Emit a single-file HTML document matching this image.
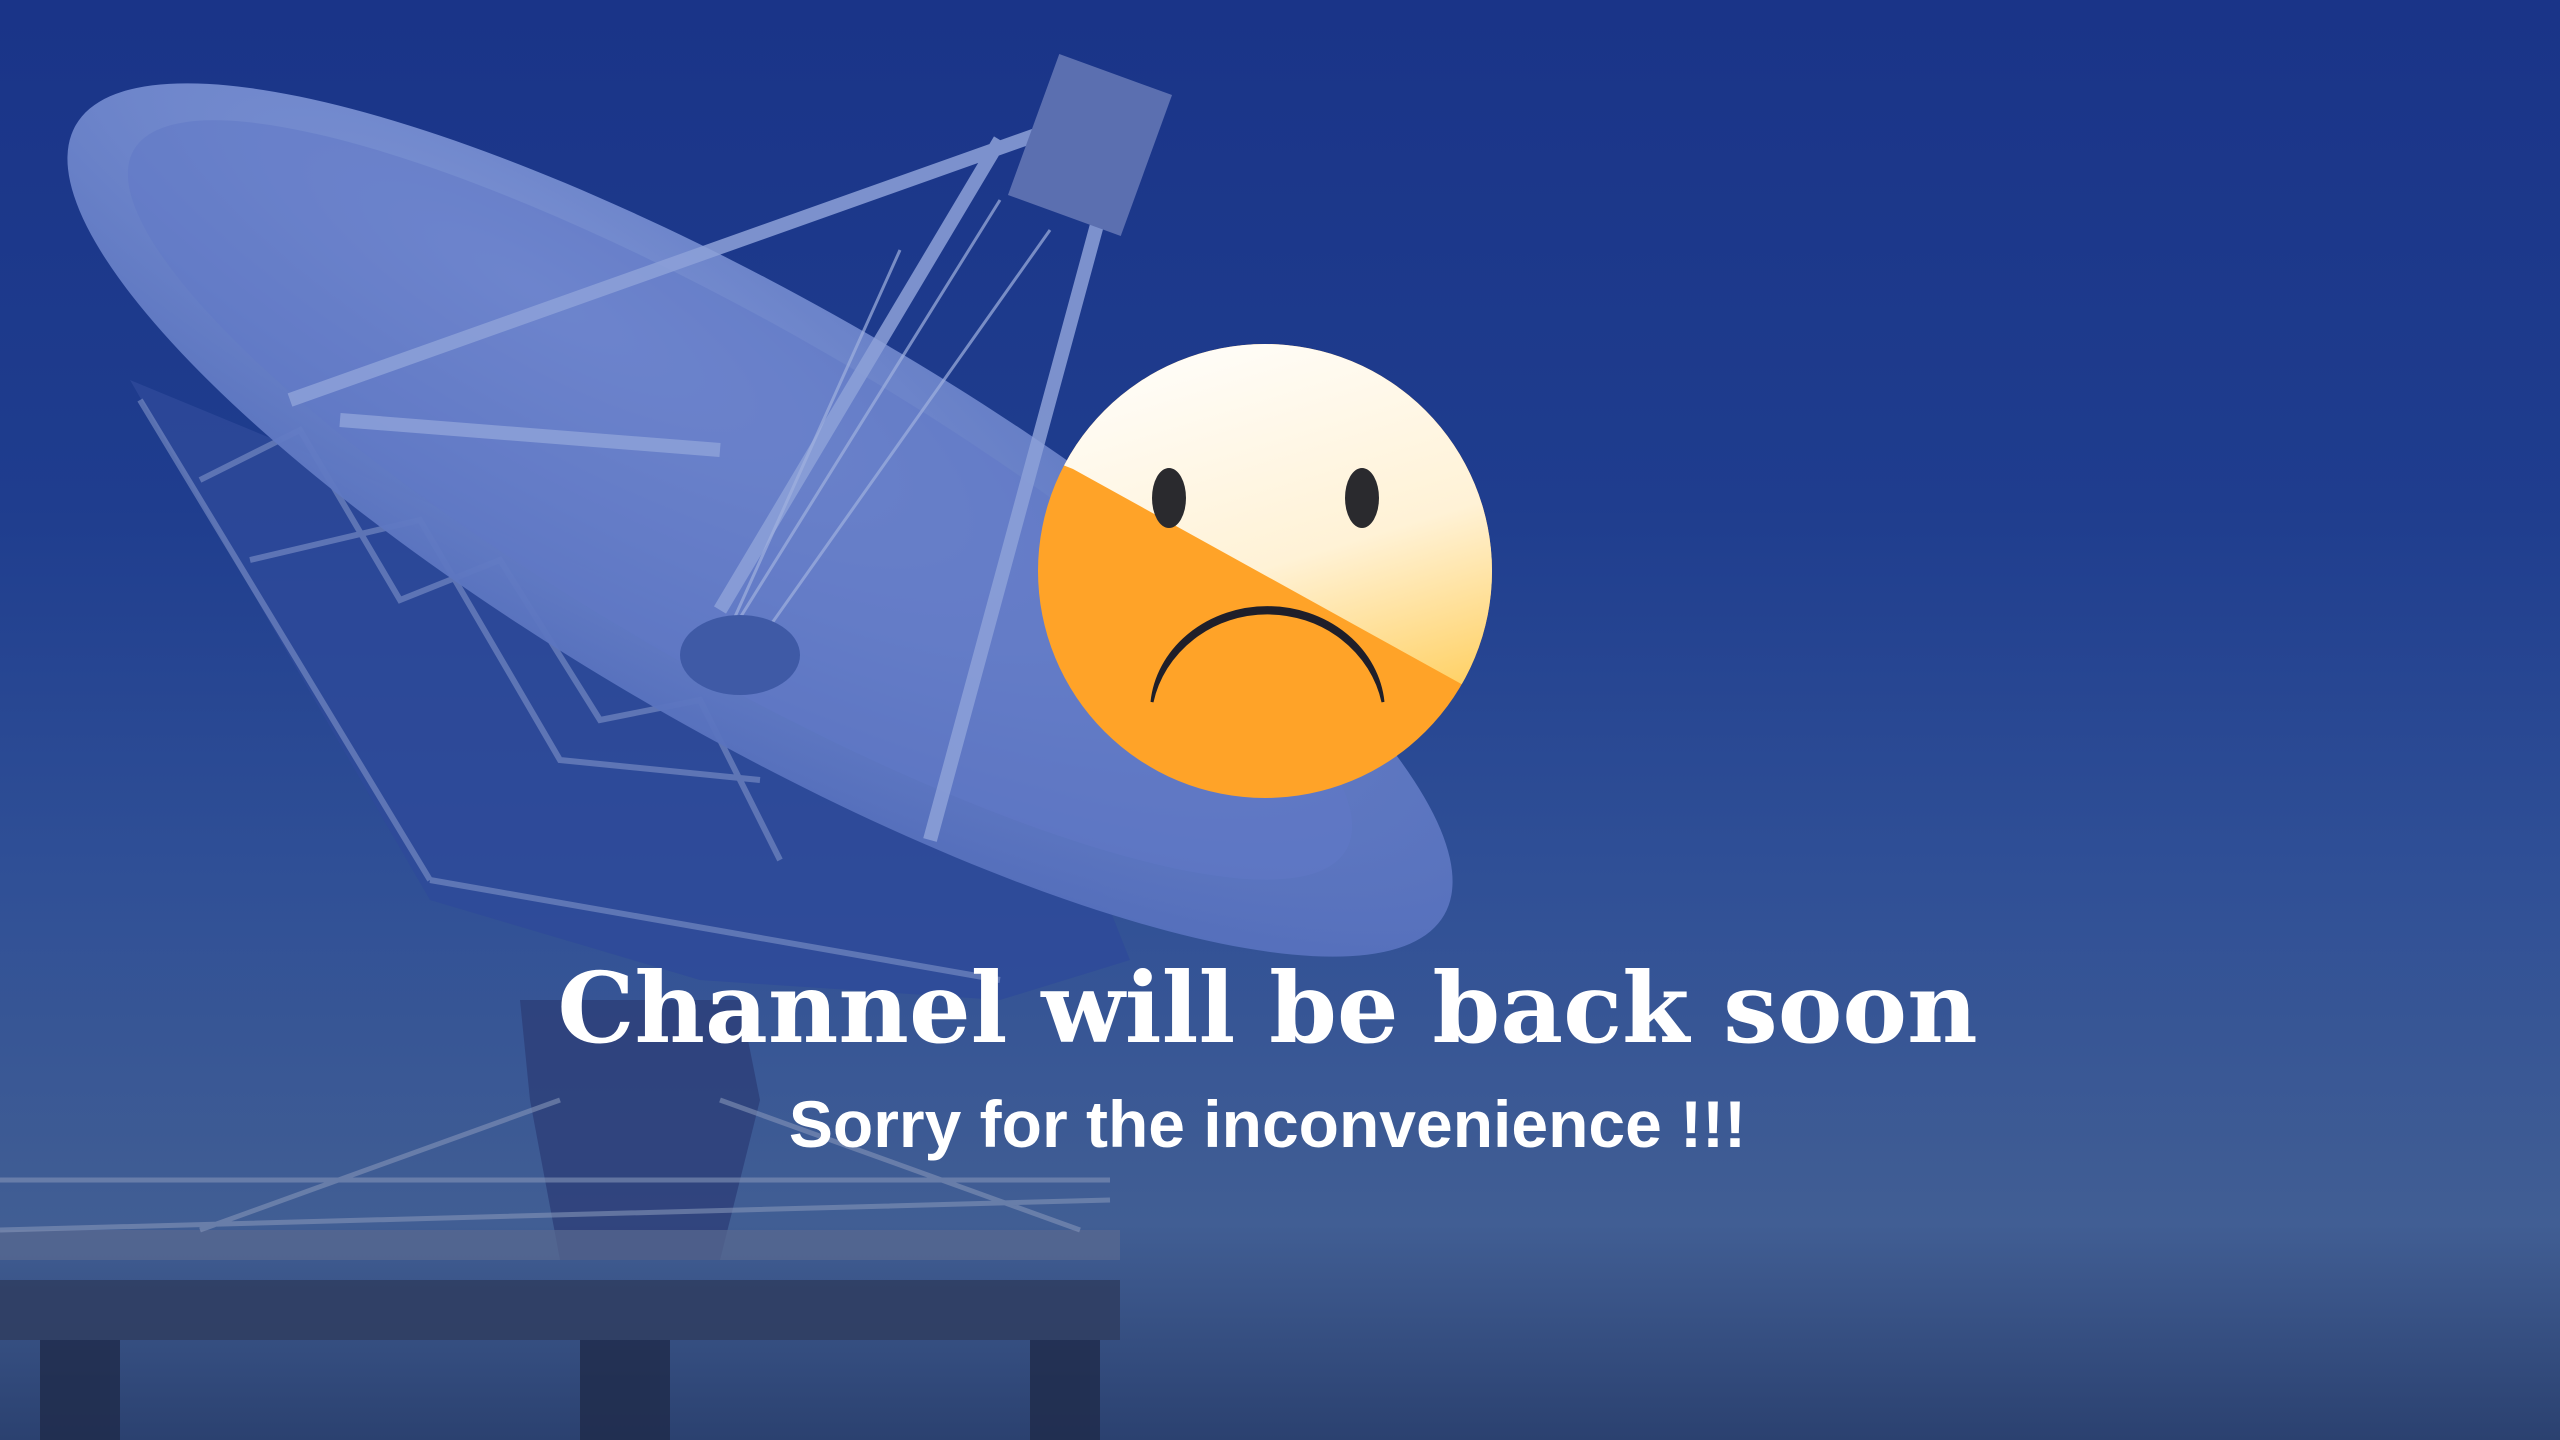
<!DOCTYPE html>
<html><head><meta charset="utf-8"><style>
html,body{margin:0;padding:0}
body{width:2560px;height:1440px;overflow:hidden;position:relative;
background:linear-gradient(180deg,#1a3488 0%,#1f3d8e 35%,#2f4f96 60%,#415e94 85%,#2b4170 100%);}
svg{position:absolute;left:0;top:0}
.t1{position:absolute;left:0;width:2535px;text-align:center;top:960px;font-family:"DejaVu Serif","Liberation Serif",serif;font-weight:bold;font-size:97px;color:#fff;line-height:1}
.t2{position:absolute;left:0;width:2535px;text-align:center;top:1091px;font-family:"Liberation Sans",sans-serif;font-weight:bold;font-size:66px;color:#fff;line-height:1}
</style></head><body>
<svg width="2560" height="1440" viewBox="0 0 2560 1440">
<defs>
<radialGradient id="dish" cx="0.3" cy="0.3" r="0.8">
<stop offset="0" stop-color="#8298d8"/><stop offset="1" stop-color="#5670bd"/></radialGradient>
<linearGradient id="hl" x1="0.3" y1="0" x2="0.7" y2="1">
<stop offset="0" stop-color="#ffffff"/><stop offset="0.55" stop-color="#fff2d6"/><stop offset="1" stop-color="#ffc640"/></linearGradient>
<clipPath id="fc"><circle cx="1265" cy="571" r="227"/></clipPath>
</defs>
<path d="M130 380 L430 900 L700 980 L1000 1000 L1130 960 L1050 760 Z" fill="#2e4a9a" opacity="0.8"/>
<g stroke="#7f93c8" stroke-width="6" opacity="0.6" fill="none">
<path d="M140 400 L430 880 M200 480 L300 430 L400 600 L500 560 L600 720 L700 700 L780 860 M250 560 L420 520 L560 760 L760 780 M430 880 L1000 980"/>
</g>
<path d="M520 1000 L740 1000 L760 1100 L720 1260 L560 1260 L530 1100 Z" fill="#2d3f78" opacity="0.8"/>
<rect x="0" y="1230" width="1120" height="30" fill="#5a6a90" opacity="0.7"/>
<rect x="0" y="1280" width="1120" height="60" fill="#2f3d60" opacity="0.85"/>
<g fill="#1f2a4a" opacity="0.8"><rect x="40" y="1340" width="80" height="100"/><rect x="580" y="1340" width="90" height="100"/><rect x="1030" y="1340" width="70" height="100"/></g>
<g stroke="#8494b8" stroke-width="5" opacity="0.6"><path d="M0 1230 L1110 1200 M0 1180 L1110 1180 M560 1100 L200 1230 M720 1100 L1080 1230"/></g>
<ellipse cx="760" cy="520" rx="790" ry="215" transform="rotate(30 760 520)" fill="url(#dish)" opacity="0.95"/>
<ellipse cx="740" cy="500" rx="700" ry="170" transform="rotate(30 740 500)" fill="#6079c6" opacity="0.55"/>
<g stroke="#8da1d8" stroke-width="14" fill="none" opacity="0.85">
<path d="M290 400 L1050 130 M1000 140 L720 610 M1120 140 L930 840 M340 420 L720 450"/>
</g>
<g stroke="#9fb0de" stroke-width="3" fill="none" opacity="0.7">
<path d="M720 650 L1000 200 M760 640 L1050 230 M720 650 L900 250"/>
</g>
<rect x="1030" y="70" width="120" height="150" fill="#5b6fb0" transform="rotate(20 1090 145)"/>
<ellipse cx="740" cy="655" rx="60" ry="40" fill="#3f5aa6"/>
<circle cx="1265" cy="571" r="227" fill="#ffa328"/>
<g clip-path="url(#fc)"><path d="M1000 300 L1600 300 L1600 760 L1465 686 L1073 469 L1000 440 Z" fill="url(#hl)"/></g>
<ellipse cx="1169" cy="498" rx="17" ry="30" fill="#2a2a2e"/>
<ellipse cx="1362" cy="498" rx="17" ry="30" fill="#2a2a2e"/>
<path d="M1152 702 A118 112 0 0 1 1383 702 A116 104 0 0 0 1152 702 Z" fill="#1f1f2a" stroke="#1f1f2a" stroke-width="3"/>
</svg>
<div class="t1">Channel will be back soon</div>
<div class="t2">Sorry for the inconvenience !!!</div>
</body></html>
